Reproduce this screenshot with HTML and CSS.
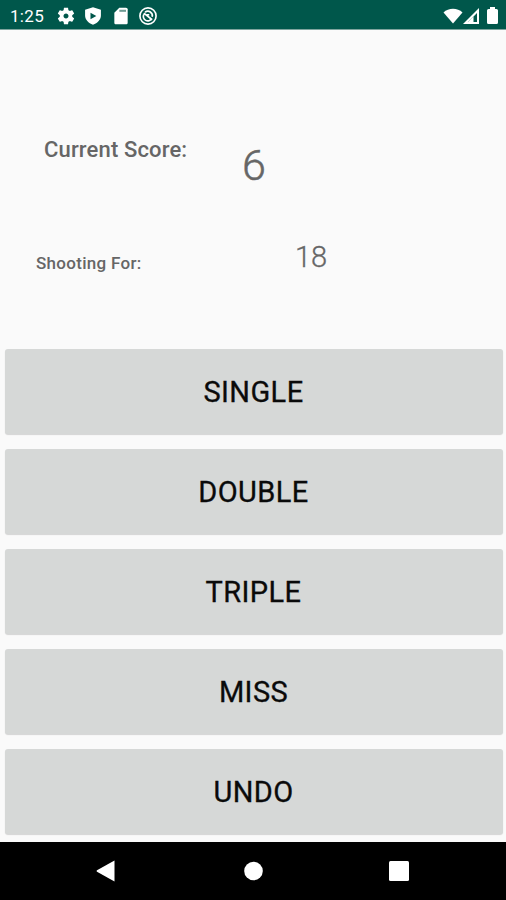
FILE: index.html
```html
<!DOCTYPE html>
<html lang="en">
<head>
    <meta charset="UTF-8">
    <meta name="viewport" content="width=device-width, initial-scale=1.0">
    <title>Darts Score</title>
    <link rel="stylesheet" href="styles.css">
</head>
<body>
    <div class="status-bar">
        <span class="clock">1:25</span>
        <div class="status-icons">
            <!-- settings -->
            <svg width="20" height="20" viewBox="0 0 24 24"><path fill="#fff" d="M19.43 12.98c.04-.32.07-.64.07-.98s-.03-.66-.07-.98l2.11-1.65c.19-.15.24-.42.12-.64l-2-3.46c-.12-.22-.39-.3-.61-.22l-2.49 1c-.52-.4-1.08-.73-1.69-.98l-.38-2.65C14.46 2.18 14.25 2 14 2h-4c-.25 0-.46.18-.49.42l-.38 2.65c-.61.25-1.17.59-1.69.98l-2.49-1c-.23-.09-.49 0-.61.22l-2 3.46c-.13.22-.07.49.12.64l2.11 1.65c-.04.32-.07.65-.07.98s.03.66.07.98l-2.11 1.65c-.19.15-.24.42-.12.64l2 3.46c.12.22.39.3.61.22l2.49-1c.52.4 1.08.73 1.69.98l.38 2.65c.03.24.24.42.49.42h4c.25 0 .46-.18.49-.42l.38-2.65c.61-.25 1.17-.59 1.69-.98l2.49 1c.23.09.49 0 .61-.22l2-3.46c.12-.22.07-.49-.12-.64l-2.11-1.65zM12 15c-1.650 0-3-1.350-3-3s1.350-3 3-3 3 1.350 3 3-1.350 3-3 3z"/></svg>
            <!-- play protect -->
            <svg width="20" height="20" viewBox="0 0 24 24"><path fill="#fff" fill-rule="evenodd" d="M12 1.500L2.500 4.500v7c0 5 4 9.200 9.500 11 5.500-1.800 9.500-6 9.500-11v-7zM9 8v8l7-4z"/></svg>
            <!-- sd card -->
            <svg width="20" height="20" viewBox="0 0 24 24"><path fill="#fff" d="M18 2h-8L4 8v12c0 1.100.9 2 2 2h12c1.100 0 2-.9 2-2V4c0-1.100-.9-2-2-2z"/><path fill="#6f9c94" d="M10 4.500h8v2.500h-8z"/></svg>
            <svg width="20" height="20" viewBox="0 0 24 24" fill="none" stroke="#fff" stroke-width="2"><circle cx="12" cy="12" r="9.700"/><path d="M7 10a5.300 5.300 0 1 0 9.500 5M8.500 7.500a5.300 5.300 0 0 1 8.500 5.500M7 8.500l10 8M10.500 10.500h3"/></svg>
        </div>
        <div class="system-icons">
            <svg width="20" height="16" viewBox="0 0 20 16"><path fill="#fff" d="M10 15.500L.5 4.500C5.500-.5 14.500-.5 19.500 4.500z"/></svg>
            <svg width="17" height="16" viewBox="0 0 17 16"><path fill="#fff" fill-rule="evenodd" d="M16 0v16H0zM14 5L5 14h9z"/><path fill="#fff" d="M5 14l5.500-5.500V14z"/></svg>
            <svg class="battery" width="11" height="17" viewBox="0 0 11 17"><path fill="#fff" d="M3 0h5v2h1.500Q11 2 11 3.500v12Q11 17 9.500 17h-8Q0 17 0 15.500v-12Q0 2 1.500 2H3z"/></svg>
        </div>
    </div>

    <div class="content">
        <div class="score-row">
            <span class="score-label">Current Score:</span>
            <span id="score" class="score-value">6</span>
        </div>
        <div class="target-row">
            <span class="target-label">Shooting For:</span>
            <span id="target" class="target-value">18</span>
        </div>
        <div class="buttons">
            <button class="throw-button">SINGLE</button>
            <button class="throw-button">DOUBLE</button>
            <button class="throw-button">TRIPLE</button>
            <button class="throw-button">MISS</button>
            <button class="throw-button">UNDO</button>
        </div>
    </div>

    <div class="navigation-bar">
        <svg width="20" height="22" viewBox="0 0 20 22"><path fill="#fff" d="M18.500.5v21L1 11.800Q0 11 1 10.200z"/></svg>
        <svg width="20" height="20" viewBox="0 0 20 20"><circle cx="10.500" cy="10" r="9.300" fill="#fff"/></svg>
        <svg width="20" height="20" viewBox="0 0 20 20"><rect width="20" height="20" rx="1.500" fill="#fff"/></svg>
    </div>
</body>
</html>
```

FILE: styles.css
```css
body {
    font-family: Roboto, sans-serif;
    background-color: #fafafa;
    color: #666666;
    display: flex;
    flex-direction: column;
    height: 100vh;
    margin: 0;
    overflow: hidden;
}

svg {
    display: block;
}

/* Status bar */
.status-bar {
    display: flex;
    align-items: center;
    height: 30px;
    padding: 2px 8px 0 10px;
    box-sizing: border-box;
    background-color: #00574b;
    border-bottom: 1px solid #7fa59e;
    color: #ffffff;
}

.clock {
    width: 46px;
    font-size: 17px;
    letter-spacing: 0.3px;
    line-height: 20px;
}

.status-icons {
    display: flex;
    gap: 7.3px;
}

.system-icons {
    display: flex;
    align-items: center;
    margin-left: auto;
}

.battery {
    margin-left: 7px;
}

/* Score display */
.content {
    flex: 1;
}

.score-row,
.target-row {
    display: flex;
    align-items: flex-start;
}

.score-row {
    height: 98px;
    padding: 107px 0 0 44px;
}

.score-label {
    width: 198px;
    font-size: 22px;
    font-weight: 500;
    letter-spacing: 0.15px;
    line-height: 26px;
}

.score-value {
    padding-top: 2px;
    font-size: 43px;
    font-weight: 300;
    line-height: 52px;
    -webkit-text-stroke: 0.5px #666666;
}

.target-row {
    height: 108px;
    padding: 6px 0 0 36px;
}

.target-label {
    width: 259px;
    padding-top: 12px;
    font-size: 17px;
    font-weight: 500;
    letter-spacing: 0.3px;
    line-height: 20px;
}

.target-value {
    font-size: 29px;
    font-weight: 300;
    line-height: 33px;
    -webkit-text-stroke: 0.3px #666666;
}

/* Buttons */
.buttons {
    display: flex;
    flex-direction: column;
    gap: 15px;
    padding: 0 3.5px 0 4.5px;
}

.throw-button {
    height: 85px;
    padding: 0;
    border: none;
    border-radius: 3px;
    background-color: #d6d8d7;
    box-shadow: 0 1px 1px #d4d4d4;
    color: #0a0a0a;
    font-family: inherit;
    font-size: 29px;
    letter-spacing: 0.4px;
    -webkit-text-stroke: 0.3px #0a0a0a;
}

/* Navigation bar */
.navigation-bar {
    display: flex;
    align-items: center;
    justify-content: space-between;
    height: 58px;
    padding: 0 97px 0 96px;
    background-color: #000000;
}
```
